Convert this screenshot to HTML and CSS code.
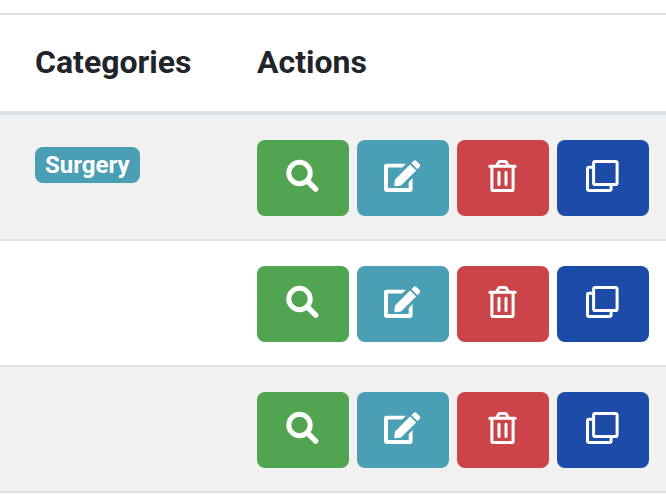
FILE: index.html
```html
<!DOCTYPE html>
<html lang="en">
<head>
<meta charset="utf-8">
<title>Categories</title>
<link rel="stylesheet" href="styles.css">
</head>
<body>
<svg class="sprite" aria-hidden="true">
  <symbol id="search" viewBox="0 0 40 40">
    <circle cx="16.5" cy="15" r="10.7" fill="none" stroke="currentColor" stroke-width="5"/>
    <path d="M25 23.5 32.7 31.2" fill="none" stroke="currentColor" stroke-width="5.4" stroke-linecap="round"/>
  </symbol>
  <symbol id="edit" viewBox="0 0 40 40">
    <path d="M23 5.7 19.2 9.6H5V30H25.7V24L29.6 20.1V31.6Q29.6 34 27.2 34H3.4Q1 34 1 31.6V8.1Q1 5.7 3.4 5.7Z" fill="currentColor"/>
    <path d="M27 6.6 33.2 12.6 18 27.6 12.5 28.2Q11.2 28.2 11.3 27L12 21.6ZM28.4 5.2 30.6 3Q32 1.6 33.5 3L36.6 6Q38 7.5 36.6 9L34.5 11.2Z" fill="currentColor"/>
  </symbol>
  <symbol id="trash" viewBox="0 0 40 40">
    <g fill="none" stroke="currentColor" stroke-width="3" stroke-linecap="round" stroke-linejoin="round">
      <path d="M6.8 8.3H32.2M13.8 7.5 15.6 4.2Q16 3.5 17 3.5H22Q23 3.5 23.4 4.2L25.2 7.5M8.9 8.5V31.2Q8.9 32.5 10.2 32.5H28.8Q30.1 32.5 30.1 31.2V8.5"/>
      <path d="M16 14.2V26.5M23 14.2V26.5"/>
    </g>
  </symbol>
  <symbol id="clone" viewBox="0 0 40 40">
    <g fill="none" stroke="currentColor" stroke-width="3">
      <rect x="10.6" y="3.5" width="23.5" height="23" rx="1.6"/>
      <path d="M10 9.3H6.3Q4.5 9.3 4.5 11V30.8Q4.5 32.5 6.3 32.5H26.3Q28.1 32.5 28.1 30.8V27"/>
    </g>
  </symbol>
</svg>
<table class="table">
  <thead>
    <tr><th class="category" scope="col">Categories</th><th scope="col">Actions</th></tr>
  </thead>
  <tbody>
    <tr>
      <td class="category"><span class="badge">Surgery</span></td>
      <td><div class="actions">
        <button class="btn view" type="button" aria-label="View"><svg class="icon"><use href="#search"/></svg></button>
        <button class="btn edit" type="button" aria-label="Edit"><svg class="icon"><use href="#edit"/></svg></button>
        <button class="btn delete" type="button" aria-label="Delete"><svg class="icon"><use href="#trash"/></svg></button>
        <button class="btn copy" type="button" aria-label="Duplicate"><svg class="icon"><use href="#clone"/></svg></button>
      </div></td>
    </tr>
    <tr>
      <td class="category"></td>
      <td><div class="actions">
        <button class="btn view" type="button" aria-label="View"><svg class="icon"><use href="#search"/></svg></button>
        <button class="btn edit" type="button" aria-label="Edit"><svg class="icon"><use href="#edit"/></svg></button>
        <button class="btn delete" type="button" aria-label="Delete"><svg class="icon"><use href="#trash"/></svg></button>
        <button class="btn copy" type="button" aria-label="Duplicate"><svg class="icon"><use href="#clone"/></svg></button>
      </div></td>
    </tr>
    <tr>
      <td class="category"></td>
      <td><div class="actions">
        <button class="btn view" type="button" aria-label="View"><svg class="icon"><use href="#search"/></svg></button>
        <button class="btn edit" type="button" aria-label="Edit"><svg class="icon"><use href="#edit"/></svg></button>
        <button class="btn delete" type="button" aria-label="Delete"><svg class="icon"><use href="#trash"/></svg></button>
        <button class="btn copy" type="button" aria-label="Duplicate"><svg class="icon"><use href="#clone"/></svg></button>
      </div></td>
    </tr>
  </tbody>
</table>
</body>
</html>
```
FILE: styles.css
```css
* {
  box-sizing: border-box;
}

body {
  margin: 0;
  padding-top: 13px;
  background: #fff;
  color: #212529;
  font-family: Roboto, "Liberation Sans", sans-serif;
  font-size: 32px;
  line-height: 48px;
}

.sprite {
  display: none;
}

.table {
  width: 100%;
  border-spacing: 0;
  table-layout: fixed;
}

th {
  padding: 23px 24px 25px;
  border-top: 2px solid #dee2e6;
  border-bottom: 4px solid #dee2e6;
  font-weight: 700;
  text-align: left;
}

td {
  padding: 25px 0 23px 24px;
  border-bottom: 2px solid #dee2e6;
  vertical-align: top;
}

.category {
  width: 233px;
  padding-left: 35px;
}

tbody tr:nth-child(odd) {
  background: #f1f1f1;
}

.badge {
  display: block;
  width: fit-content;
  margin-top: 7px;
  padding: 6px 10px;
  border-radius: 8px;
  background: #4a9fb5;
  color: #fff;
  font-size: 24px;
  font-weight: 700;
  line-height: 24px;
}

.actions {
  display: flex;
  gap: 8px;
}

.btn {
  width: 92px;
  padding: 18px 0;
  border: 0;
  border-radius: 8px;
  color: #fff;
  cursor: pointer;
}

.icon {
  display: block;
  width: 40px;
  height: 40px;
  margin: 0 auto;
}

.view {
  background: #52a550;
}

.edit {
  background: #4a9fb5;
}

.delete {
  background: #cb444a;
}

.copy {
  background: #1d4ba8;
}
```
